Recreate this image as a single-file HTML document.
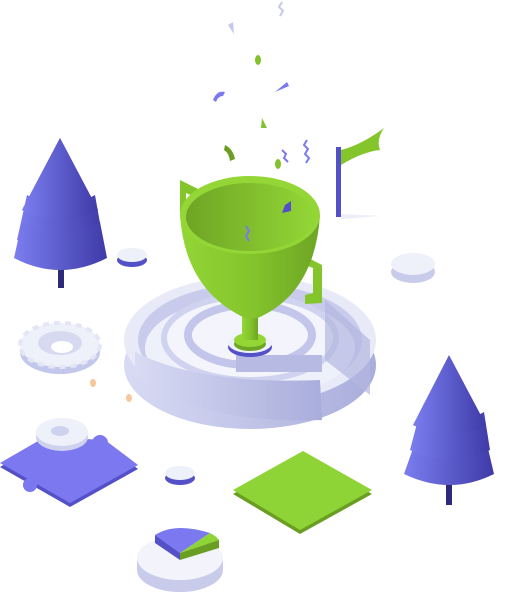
<!DOCTYPE html>
<html><head><style>html,body{margin:0;padding:0;background:#fff;width:514px;height:593px;overflow:hidden}</style></head>
<body>
<svg width="514" height="593" viewBox="0 0 514 593" xmlns="http://www.w3.org/2000/svg">
<defs>
<linearGradient id="tree" x1="0" x2="1"><stop offset="0" stop-color="#7b7ef0"/><stop offset="1" stop-color="#3f3aa8"/></linearGradient>
<linearGradient id="cup" x1="0" x2="1"><stop offset="0" stop-color="#93d636"/><stop offset="0.5" stop-color="#84c52c"/><stop offset="1" stop-color="#6ea524"/></linearGradient>
<linearGradient id="cupin" x1="0" x2="1"><stop offset="0" stop-color="#6ea524"/><stop offset="1" stop-color="#93d636"/></linearGradient>
<linearGradient id="wall" x1="0" x2="1"><stop offset="0" stop-color="#d8dbf3"/><stop offset="1" stop-color="#a9addb"/></linearGradient>
</defs>
<!-- confetti -->
<g fill="#7b78f0">
<path d="M228 25 l5 -3 l1 12 z" fill="#c5c7ef"/>
<path d="M213 100 q4 -10 12 -8 l-2 4 q-5 0 -7 6z"/>
<path d="M275 92 l12 -10 l2 4z"/>
<path d="M282 150 l4 4 l-2 4 l4 4" stroke="#7b78f0" fill="none" stroke-width="2"/>
<path d="M307 140 l-3 5 l4 4 l-3 5 l4 4 l-3 5" stroke="#7b78f0" fill="none" stroke-width="2"/>
<path d="M282 2 l-3 5 l4 4 l-3 5" stroke="#c5c7ef" fill="none" stroke-width="2"/>
</g>
<g fill="#83c22e">
<ellipse cx="258" cy="60" rx="3" ry="5"/>
<path d="M262 118 l5 10 l-6 0z"/>
<path d="M225 145 q8 4 10 14 l-5 2 q-1 -8 -6 -11z" fill="#6a9e22"/>
<ellipse cx="278" cy="164" rx="3" ry="5"/>
</g>
<ellipse cx="93" cy="383" rx="3" ry="4" fill="#f6c79a"/>
<ellipse cx="129" cy="398" rx="3" ry="4" fill="#f6c79a"/>
<!-- flag -->
<rect x="336" y="147" width="5" height="70" fill="#5350c8"/>
<path d="M341 150 q20 -5 43 -22 q-8 12 -4 22 q-18 2 -39 15z" fill="#84c52c"/>
<path d="M341 214 l40 2 l-40 3z" fill="#eceef9"/>
<!-- left tree -->
<rect x="58" y="250" width="6" height="38" fill="#2e2a7a"/>
<path d="M60 138 L98 210 Q60 230 22 210Z" fill="url(#tree)"/>
<path d="M27 195 Q60 215 95 195 L103 240 Q60 262 17 240Z" fill="url(#tree)"/>
<path d="M22 222 Q60 245 100 222 L107 258 Q60 282 14 258Z" fill="url(#tree)"/>
<path d="M60 138 L98 210 Q60 230 22 210Z" fill="url(#tree)"/>
<!-- right tree -->
<rect x="446" y="470" width="6" height="35" fill="#2e2a7a"/>
<path d="M449 355 L439 0Z" fill="none"/>
<path d="M22 0" fill="none"/>
<path d="M416 440 Q450 460 486 440 L494 474 Q450 496 404 474Z" fill="url(#tree)"/>
<path d="M420 412 Q450 432 484 412 L490 450 Q450 470 410 450Z" fill="url(#tree)"/>
<path d="M449 355 L486 425 Q450 444 413 425Z" fill="url(#tree)"/>
<!-- coins -->
<g>
<ellipse cx="132" cy="260" rx="15" ry="7" fill="#5350c8"/><ellipse cx="132" cy="255" rx="15" ry="7" fill="#eef0fa"/>
<ellipse cx="413" cy="272" rx="22" ry="11" fill="#c9cbeb"/><ellipse cx="413" cy="264" rx="22" ry="11" fill="#eef0fa"/>
<ellipse cx="180" cy="478" rx="15" ry="7" fill="#5350c8"/><ellipse cx="180" cy="473" rx="15" ry="7" fill="#eef0fa"/>
</g>
<!-- gear -->
<ellipse cx="60" cy="352" rx="40" ry="22" fill="#c4c7ec"/>
<ellipse cx="60" cy="345" rx="40" ry="22" fill="#eef0fa" stroke="#e4e6f5" stroke-width="4" stroke-dasharray="6 5"/>
<ellipse cx="60" cy="343" rx="22" ry="12" fill="#d7d9f1"/>
<ellipse cx="62" cy="347" rx="11" ry="6" fill="#fff"/>
<!-- purple puzzle -->
<path d="M0 467 L45 441 L105 444 L138 469 L70 507Z" fill="#5350c8"/>
<path d="M0 463 L45 437 L105 440 L138 465 L70 503Z" fill="#7b78f0"/>
<circle cx="30" cy="485" r="7" fill="#7b78f0"/><circle cx="100" cy="443" r="8" fill="#7b78f0"/>
<ellipse cx="62" cy="437" rx="26" ry="14" fill="#cfd2ef"/><ellipse cx="62" cy="432" rx="26" ry="14" fill="#eef0fa"/><ellipse cx="60" cy="431" rx="9" ry="5" fill="#cfd2ef"/>
<!-- green puzzle -->
<path d="M233 494 L303 455 L372 494 L300 534Z" fill="#6a9e22"/>
<path d="M233 490 L303 451 L372 490 L300 530Z" fill="#8fd436"/>
<!-- pie -->
<ellipse cx="180" cy="570" rx="43" ry="22" fill="#c9cbeb"/>
<rect x="137" y="558" width="86" height="12" fill="#c9cbeb"/>
<ellipse cx="180" cy="558" rx="43" ry="22" fill="#f2f3fb"/>
<path d="M155 535 Q175 522 210 533 L180 553Z" fill="#7b78f0"/>
<path d="M155 535 L155 543 L180 560 L180 553Z" fill="#5350c8"/>
<path d="M210 533 Q216 536 219 540 L180 553Z" fill="#8fd436"/>
<path d="M219 540 L219 548 L180 560 L180 553Z" fill="#6a9e22"/>
<!-- maze -->
<ellipse cx="250" cy="365" rx="126" ry="64" fill="url(#wall)"/>
<ellipse cx="250" cy="340" rx="126" ry="64" fill="#e8eaf8"/>
<ellipse cx="250" cy="340" rx="112" ry="56" fill="#c8cbec"/>
<ellipse cx="250" cy="348" rx="105" ry="50" fill="#eef0fa"/>
<ellipse cx="250" cy="338" rx="86" ry="42" fill="#f4f5fc" stroke="#d0d3ef" stroke-width="6"/>
<ellipse cx="250" cy="335" rx="62" ry="30" fill="#f4f5fc" stroke="#c3c6ea" stroke-width="8"/>
<path d="M135 375 L135 352 Q200 385 320 380 L322 420 Q200 425 135 375Z" fill="url(#wall)"/>
<path d="M236 355 L236 372 L322 372 L322 355Z" fill="#b7bae2"/>
<ellipse cx="250" cy="347" rx="22" ry="10" fill="#5350c8"/>
<ellipse cx="250" cy="343" rx="22" ry="10" fill="#eef0fa"/>
<path d="M325 300 L370 340 L370 395 L325 360Z" fill="#b3b6e0" opacity="0.7"/>
<!-- trophy -->
<ellipse cx="250" cy="344" rx="16" ry="7" fill="#6ea524"/>
<ellipse cx="250" cy="340" rx="16" ry="7" fill="#93d636"/>
<rect x="242" y="300" width="16" height="40" fill="url(#cup)"/>
<path d="M297 252 L322 265 L322 303 L305 304 L305 295 L313 293 L313 268 L297 262Z" fill="#84c52c"/>
<path d="M180 180 L200 190 L195 197 L186 193 L186 215 L180 212Z" fill="#84c52c"/>
<path d="M180 215 Q185 290 245 318 Q255 320 262 316 Q315 290 320 215Z" fill="url(#cup)"/>
<ellipse cx="250" cy="215" rx="70" ry="39" fill="#93d636"/>
<ellipse cx="250" cy="217" rx="64" ry="34" fill="url(#cupin)"/>
<path d="M285 205 l6 -4 l0 10 l-9 2z" fill="#5350c8"/>
<path d="M246 226 l3 5 l-3 5 l3 5" stroke="#7b78f0" fill="none" stroke-width="2"/>
</svg>
</body></html>
